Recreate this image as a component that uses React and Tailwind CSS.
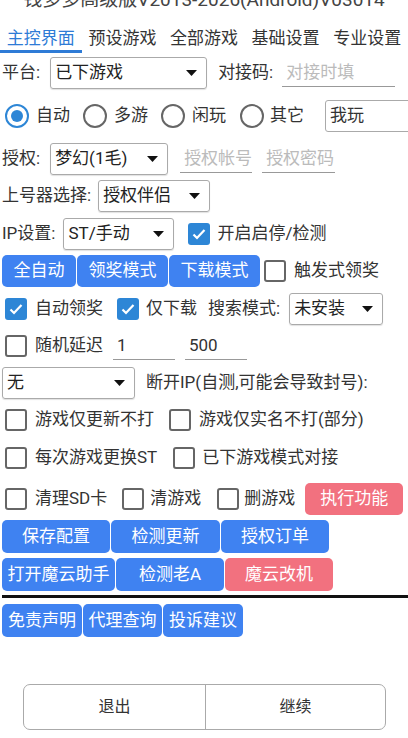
import React from 'react';

function Arrow() {
  return (
    <svg width="11" height="6" viewBox="0 0 11 6" className="shrink-0">
      <path d="M0 0h11L5.5 6z" fill="#111" />
    </svg>
  );
}

function Select({ text, className }) {
  return (
    <div className={`flex items-center justify-between h-[32px] border border-[#aaa] rounded-[3px] pl-[4px] pr-[9px] shadow-[0_1px_1px_rgba(0,0,0,0.12)] text-[#222] shrink-0 ${className}`}>
      <span>{text}</span>
      <Arrow />
    </div>
  );
}

function Line({ value, placeholder, className }) {
  return (
    <div className={`flex items-center h-[28px] border-b border-[#999] pl-[4px] shrink-0 ${className}`}>
      {value ? <span className="text-[#333]">{value}</span> : <span className="text-[#bbb]">{placeholder}</span>}
    </div>
  );
}

function Check({ on, className }) {
  if (on) {
    return (
      <div className={`w-[22px] h-[22px] rounded-[3px] bg-[#2d86d6] flex items-center justify-center shrink-0 ${className}`}>
        <svg width="16" height="16" viewBox="0 0 16 16">
          <path d="M2.5 8.5l3.5 3.5 7.5-8" fill="none" stroke="#fff" strokeWidth="2.2" />
        </svg>
      </div>
    );
  }
  return <div className={`w-[22px] h-[22px] rounded-[3px] border-2 border-[#666] shrink-0 ${className}`} />;
}

function Radio({ on, className }) {
  return (
    <div className={`w-[24px] h-[24px] rounded-full border-2 flex items-center justify-center shrink-0 ${on ? 'border-[#2d86d6]' : 'border-[#666]'} ${className}`}>
      {on && <div className="w-[12px] h-[12px] rounded-full bg-[#2d86d6]" />}
    </div>
  );
}

function Btn({ children, red, className }) {
  return (
    <div className={`flex items-center justify-center h-full rounded-[5px] text-white shrink-0 ${red ? 'bg-[#f2717f]' : 'bg-[#3f82f1]'} ${className}`}>
      {children}
    </div>
  );
}

const tabs = ['主控界面', '预设游戏', '全部游戏', '基础设置', '专业设置'];

export default function App() {
  return (
    <div className="w-[408px] h-[738px] overflow-hidden bg-white text-[17px] text-[#333] font-['Roboto','Noto_Sans_CJK_SC',sans-serif] whitespace-nowrap">
      <div className="flex h-[10px] items-end justify-center overflow-hidden">
        <span className="leading-[20px] text-[19px] text-[#444]">钱多多高级版V2013-2026(Android)V03014</span>
      </div>

      <div className="flex mt-[17px]">
        {tabs.map((t, i) => (
          <div
            key={t}
            className={`w-[82px] h-[26px] flex justify-center leading-[23px] border-b-[3px] ${i === 0 ? 'border-[#2e7bd6] text-[#2e7bd6]' : 'border-transparent text-[#333]'}`}
          >
            {t}
          </div>
        ))}
      </div>

      <div className="flex items-center h-[32px] mt-[4px]">
        <span className="ml-[2px]">平台:</span>
        <Select text="已下游戏" className="w-[157px] ml-[10px]" />
        <span className="ml-[11px]">对接码:</span>
        <Line placeholder="对接时填" className="w-[113px] ml-[9px]" />
      </div>

      <div className="flex items-center h-[32px] mt-[11px] overflow-hidden">
        <Radio on className="ml-[5px]" />
        <span className="ml-[7px]">自动</span>
        <Radio className="ml-[13px]" />
        <span className="ml-[7px]">多游</span>
        <Radio className="ml-[13px]" />
        <span className="ml-[7px]">闲玩</span>
        <Radio className="ml-[14px]" />
        <span className="ml-[6px]">其它</span>
        <div className="ml-[21px] w-[100px] h-[32px] border border-[#aaa] rounded-[3px] flex items-center pl-[4px] shrink-0">我玩</div>
      </div>

      <div className="flex items-center h-[32px] mt-[11px]">
        <span className="ml-[2px]">授权:</span>
        <Select text="梦幻(1毛)" className="w-[118px] ml-[10px]" />
        <Line placeholder="授权帐号" className="w-[72px] ml-[12px]" />
        <Line placeholder="授权密码" className="w-[73px] ml-[10px]" />
      </div>

      <div className="flex items-center h-[32px] mt-[5px]">
        <span className="ml-[2px]">上号器选择:</span>
        <Select text="授权伴侣" className="w-[112px] ml-[7px]" />
      </div>

      <div className="flex items-center h-[32px] mt-[6px]">
        <span className="ml-[2px]">IP设置:</span>
        <Select text="ST/手动" className="w-[111px] ml-[8px]" />
        <Check on className="ml-[14px]" />
        <span className="ml-[7px]">开启启停/检测</span>
      </div>

      <div className="flex items-center h-[32px] mt-[5px]">
        <Btn className="w-[74px] ml-[2px]">全自动</Btn>
        <Btn className="w-[91px] ml-[1px]">领奖模式</Btn>
        <Btn className="w-[91px] ml-[1px]">下载模式</Btn>
        <Check className="ml-[4px]" />
        <span className="ml-[8px]">触发式领奖</span>
      </div>

      <div className="flex items-center h-[32px] mt-[6px]">
        <Check on className="ml-[5px]" />
        <span className="ml-[8px]">自动领奖</span>
        <Check on className="ml-[14px]" />
        <span className="ml-[7px]">仅下载</span>
        <span className="ml-[11px]">搜索模式:</span>
        <Select text="未安装" className="w-[94px] ml-[9px]" />
      </div>

      <div className="flex items-center h-[32px] mt-[5px]">
        <Check className="ml-[5px]" />
        <span className="ml-[8px]">随机延迟</span>
        <Line value="1" className="w-[62px] ml-[10px]" />
        <Line value="500" className="w-[62px] ml-[10px]" />
      </div>

      <div className="flex items-center h-[32px] mt-[5px]">
        <Select text="无" className="w-[133px] ml-[2px]" />
        <span className="ml-[11px]">断开IP(自测,可能会导致封号):</span>
      </div>

      <div className="flex items-center h-[32px] mt-[5px]">
        <Check className="ml-[5px]" />
        <span className="ml-[8px]">游戏仅更新不打</span>
        <Check className="ml-[15px]" />
        <span className="ml-[8px]">游戏仅实名不打(部分)</span>
      </div>

      <div className="flex items-center h-[32px] mt-[6px]">
        <Check className="ml-[5px]" />
        <span className="ml-[8px]">每次游戏更换ST</span>
        <Check className="ml-[16px]" />
        <span className="ml-[7px]">已下游戏模式对接</span>
      </div>

      <div className="flex items-center h-[32px] mt-[9px]">
        <Check className="ml-[5px]" />
        <span className="ml-[8px]">清理SD卡</span>
        <Check className="ml-[15px]" />
        <span className="ml-[6px]">清游戏</span>
        <Check className="ml-[16px]" />
        <span className="ml-[5px]">删游戏</span>
        <Btn red className="w-[98px] ml-[10px]">执行功能</Btn>
      </div>

      <div className="flex h-[33px] mt-[5px]">
        <Btn className="w-[108px] ml-[2px]">保存配置</Btn>
        <Btn className="w-[109px] ml-[1px]">检测更新</Btn>
        <Btn className="w-[108px] ml-[1px]">授权订单</Btn>
      </div>

      <div className="flex h-[33px] mt-[5px]">
        <Btn className="w-[113px] ml-[2px]">打开魔云助手</Btn>
        <Btn className="w-[108px] ml-[1px]">检测老A</Btn>
        <Btn red className="w-[108px] ml-[1px]">魔云改机</Btn>
      </div>

      <div className="ml-[2px] mt-[4px] border-t-[3px] border-[#111]" />

      <div className="flex h-[33px] mt-[6px]">
        <Btn className="w-[80px] ml-[2px]">免责声明</Btn>
        <Btn className="w-[79px] ml-[1px]">代理查询</Btn>
        <Btn className="w-[80px] ml-[1px]">投诉建议</Btn>
      </div>

      <div className="flex ml-[23px] w-[363px] h-[46px] mt-[47px] border border-[#aaa] rounded-[7px] text-[16px] text-[#333]">
        <div className="w-[182px] flex items-center justify-center border-r border-[#aaa]">退出</div>
        <div className="flex-1 flex items-center justify-center">继续</div>
      </div>
    </div>
  );
}
